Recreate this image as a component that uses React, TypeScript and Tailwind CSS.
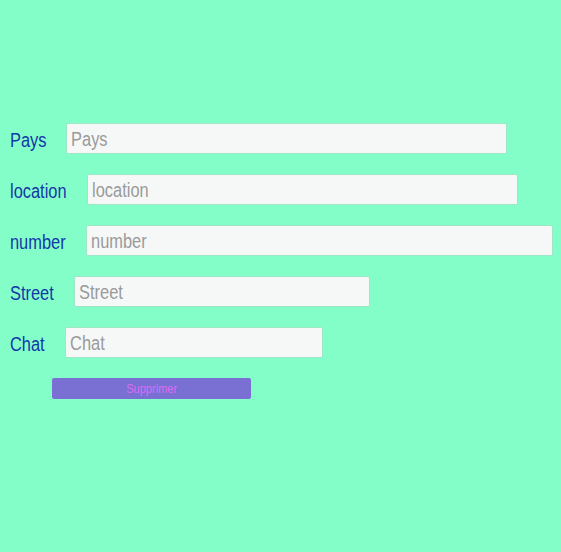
import React from 'react';

// reference uses a narrow face; Liberation Sans squeezed to ~82% stands in for it
const FIELDS = [
  { label: 'Pays', labelWidth: 'w-[36px]', width: 'w-[441px]', inner: 'w-[532px]' },
  { label: 'location', labelWidth: 'w-[57px]', width: 'w-[431px]', inner: 'w-[520px]' },
  { label: 'number', labelWidth: 'w-[56px]', width: 'w-[467px]', inner: 'w-[564px]' },
  { label: 'Street', labelWidth: 'w-[44px]', width: 'w-[296px]', inner: 'w-[356px]' },
  { label: 'Chat', labelWidth: 'w-[35px]', width: 'w-[258px]', inner: 'w-[310px]' },
];

export default function App() {
  return (
    <div className="min-h-[552px] bg-[#84fec8] pt-[123px] pl-[10px] font-['Liberation_Sans',Arial,sans-serif]">
      <div className="flex flex-col gap-[20px]">
        {FIELDS.map((field) => (
          <div key={field.label} className="flex h-[31px] items-center gap-[20px]">
            <label className={`${field.labelWidth} shrink-0 whitespace-nowrap text-[20px] leading-[24px] text-[#1437a8]`}>
              <span className="inline-block origin-left translate-y-[1px] scale-x-[0.82]">{field.label}</span>
            </label>
            <div className={`${field.width} h-[31px] shrink-0 overflow-hidden rounded-[2px] border border-[#9fe6c6] bg-[#f5f8f7]`}>
              <input
                placeholder={field.label}
                className={`${field.inner} h-full origin-left scale-x-[0.82] bg-transparent px-[5px] pt-[2px] text-[20px] text-[#555] outline-none placeholder:text-[#9a9a9a]`}
              />
            </div>
          </div>
        ))}
        <div className="flex pl-[42px]">
          <button className="h-[21px] w-[199px] rounded-[2px] bg-[#7a70d4] text-[12px] text-[#d86ef2]">
            <span className="inline-block scale-x-[0.92]">Supprimer</span>
          </button>
        </div>
      </div>
    </div>
  );
}
